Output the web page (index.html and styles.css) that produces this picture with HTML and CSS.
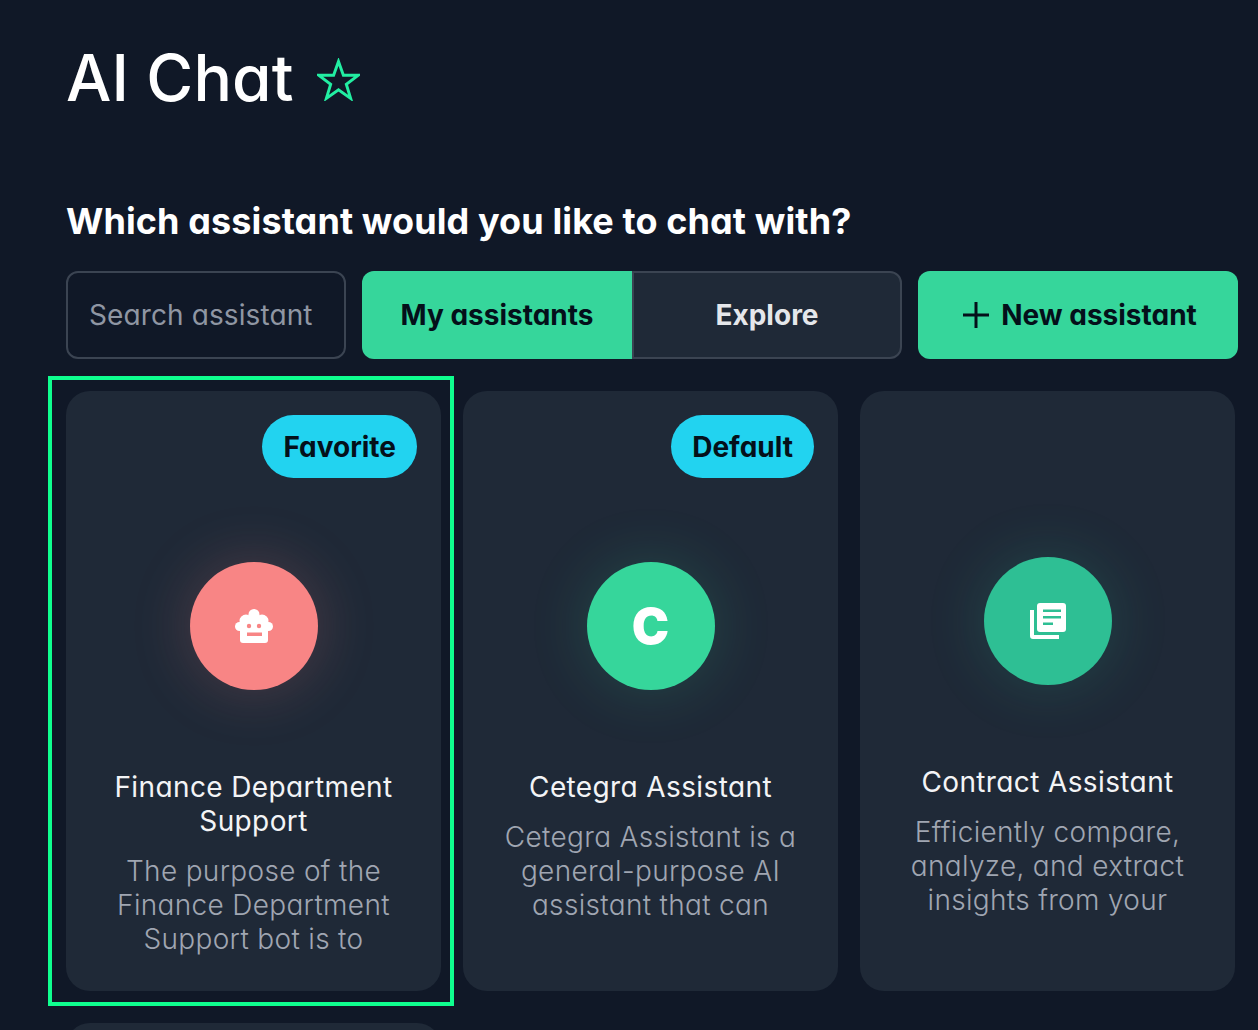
FILE: index.html
```html
<!DOCTYPE html>
<html lang="en">
<head>
<meta charset="utf-8">
<title>AI Chat</title>
<link rel="stylesheet" href="styles.css">
</head>
<body>
<main class="page">
  <header class="title-row">
    <h1 class="title">AI Chat</h1>
    <svg class="star" viewBox="0 0 44 44" aria-hidden="true"><path d="M22 3.5l5 14.2h15l-12 9.2 4.4 14.4L22 32.6 9.6 41.3 14 26.9 2 17.7h15z"/></svg>
  </header>
  <h2 class="question">Which assistant would you like to chat with?</h2>
  <div class="toolbar">
    <input class="search" type="text" placeholder="Search assistant" aria-label="Search assistant">
    <div class="tabs">
      <button class="tab tab--active" type="button">My assistants</button>
      <button class="tab" type="button">Explore</button>
    </div>
    <button class="new-btn" type="button">
      <svg class="plus" viewBox="0 0 26 26" aria-hidden="true"><path d="M13 0v26M0 13h26"/></svg>
      <span>New assistant</span>
    </button>
  </div>
  <section class="grid">
    <article class="card card--selected">
      <span class="badge">Favorite</span>
      <div class="avatar avatar--red">
        <svg class="robot" viewBox="0 0 38 34" aria-hidden="true">
          <circle class="w" cx="19" cy="5.5" r="5.5"/><circle class="w" cx="11" cy="12" r="6.5"/><circle class="w" cx="27" cy="12" r="6.5"/>
          <circle class="w" cx="4.5" cy="17.5" r="4.5"/><circle class="w" cx="33.5" cy="17.5" r="4.5"/>
          <rect class="w" x="5" y="8" width="28" height="26" rx="3"/>
          <circle class="r" cx="14" cy="17" r="2.2"/><circle class="r" cx="24" cy="17" r="2.2"/>
          <rect class="r" x="12" y="23.5" width="15" height="3.5"/>
        </svg>
      </div>
      <h3 class="name">Finance Department Support</h3>
      <p class="desc">The purpose of the Finance Department Support bot is to</p>
    </article>
    <article class="card">
      <span class="badge">Default</span>
      <div class="avatar avatar--green"><span class="letter">C</span></div>
      <h3 class="name">Cetegra Assistant</h3>
      <p class="desc">Cetegra Assistant is a general-purpose AI assistant that can</p>
    </article>
    <article class="card card--plain">
      <div class="avatar avatar--teal">
        <svg class="docs" viewBox="0 0 36 36" aria-hidden="true">
          <path class="w" d="M0 7h4v25h25v4H3a3 3 0 0 1-3-3z"/>
          <rect class="w" x="7" y="0" width="29" height="29" rx="3"/>
          <path class="t" d="M13 6.5h18v2.6H13zM13 13h18v2.6H13zM13 19.5h10v2.6H13z"/>
        </svg>
      </div>
      <h3 class="name">Contract Assistant</h3>
      <p class="desc">Efficiently compare, analyze, and extract insights from your</p>
    </article>
    <article class="card card--plain"></article>
  </section>
</main>
</body>
</html>
```
FILE: styles.css
```css
* { box-sizing: border-box; }
html, body { margin: 0; height: 100%; }
body {
  background: #101827;
  color: #fff;
  font-family: Inter, "Liberation Sans", sans-serif;
  font-feature-settings: "cv11";
  overflow: hidden;
}
.page { padding: 38px 0 0 66px; }
.title-row { display: flex; align-items: center; gap: 23px; height: 80px; }
.title {
  margin: 0;
  font-size: 64px;
  font-weight: 450;
  line-height: 80px;
  letter-spacing: .15px;
}
.star { width: 43px; height: 43px; margin-top: 2px; }
.star path { fill: none; stroke: #22eea2; stroke-width: 3; }
.question {
  margin: 83px 0 0;
  font-size: 36px;
  font-weight: 700;
  line-height: 40px;
  letter-spacing: .1px;
}
.toolbar { display: flex; gap: 16px; margin-top: 30px; height: 88px; }
.search {
  width: 280px;
  padding: 0 21px;
  background: transparent;
  border: 2px solid #3b4452;
  border-radius: 12px;
  color: #fff;
  font: 400 28px Inter, "Liberation Sans", sans-serif;
  font-feature-settings: "cv11";
  letter-spacing: .1px;
  outline: none;
}
.search::placeholder { color: #8f96a3; opacity: 1; }
.tabs { display: flex; width: 540px; }
.tab, .new-btn {
  font: 700 28px Inter, "Liberation Sans", sans-serif;
  font-feature-settings: "cv11";
  border: 0;
  padding: 0;
}
.tab {
  flex: 0 0 50%;
  background: #1f2937;
  color: #e5e7eb;
  border: 2px solid #3b4452;
  border-radius: 0 12px 12px 0;
}
.tab--active {
  background: #36d69b;
  color: #04101a;
  border: 0;
  border-radius: 12px 0 0 12px;
}
.new-btn {
  width: 320px;
  display: flex;
  align-items: center;
  justify-content: center;
  gap: 12px;
  padding-left: 4px;
  background: #36d69b;
  color: #04101a;
  border-radius: 12px;
}
.plus { width: 26px; height: 26px; }
.plus path { fill: none; stroke: #04101a; stroke-width: 3; }
.grid {
  display: grid;
  grid-template-columns: repeat(3, 375px);
  grid-auto-rows: 600px;
  gap: 32px 22px;
  margin-top: 32px;
}
.card {
  position: relative;
  display: flex;
  flex-direction: column;
  align-items: center;
  padding: 171px 28px 0;
  background: #1f2937;
  border-radius: 24px;
  text-align: center;
}
.card--plain { padding-top: 166px; }
.card--selected::after {
  content: "";
  position: absolute;
  top: -15px;
  left: -18px;
  right: -13px;
  bottom: -15px;
  border: 4px solid #0fff8f;
  pointer-events: none;
}
.badge {
  position: absolute;
  top: 24px;
  right: 24px;
  height: 63px;
  padding: 0 21px;
  display: flex;
  align-items: center;
  border-radius: 32px;
  background: #22d3f0;
  color: #04101a;
  font-size: 28px;
  font-weight: 700;
}
.avatar {
  width: 128px;
  height: 128px;
  flex: none;
  border-radius: 50%;
  display: flex;
  align-items: center;
  justify-content: center;
}
.avatar--red { background: #f88585; box-shadow: 0 0 60px rgba(248, 133, 133, .22); }
.avatar--green { background: #36d69b; box-shadow: 0 0 60px rgba(54, 214, 155, .18); }
.avatar--teal { background: #2ebf94; box-shadow: 0 0 60px rgba(46, 191, 148, .2); }
.robot { width: 38px; height: 34px; }
.robot .w { fill: #fff; }
.robot .r { fill: #f88585; }
.docs { width: 36px; height: 36px; }
.docs .w { fill: #fff; }
.docs .t { fill: #2ebf94; }
.letter { font-size: 50px; font-weight: 900; line-height: 1; }
.name {
  margin: 80px 0 0;
  font-size: 28px;
  font-weight: 400;
  line-height: 34px;
  letter-spacing: .38px;
  color: #f3f4f6;
}
.desc {
  margin: 16px 0 0;
  font-size: 28px;
  font-weight: 300;
  line-height: 34px;
  letter-spacing: .32px;
  color: #a0a6b2;
}
```
